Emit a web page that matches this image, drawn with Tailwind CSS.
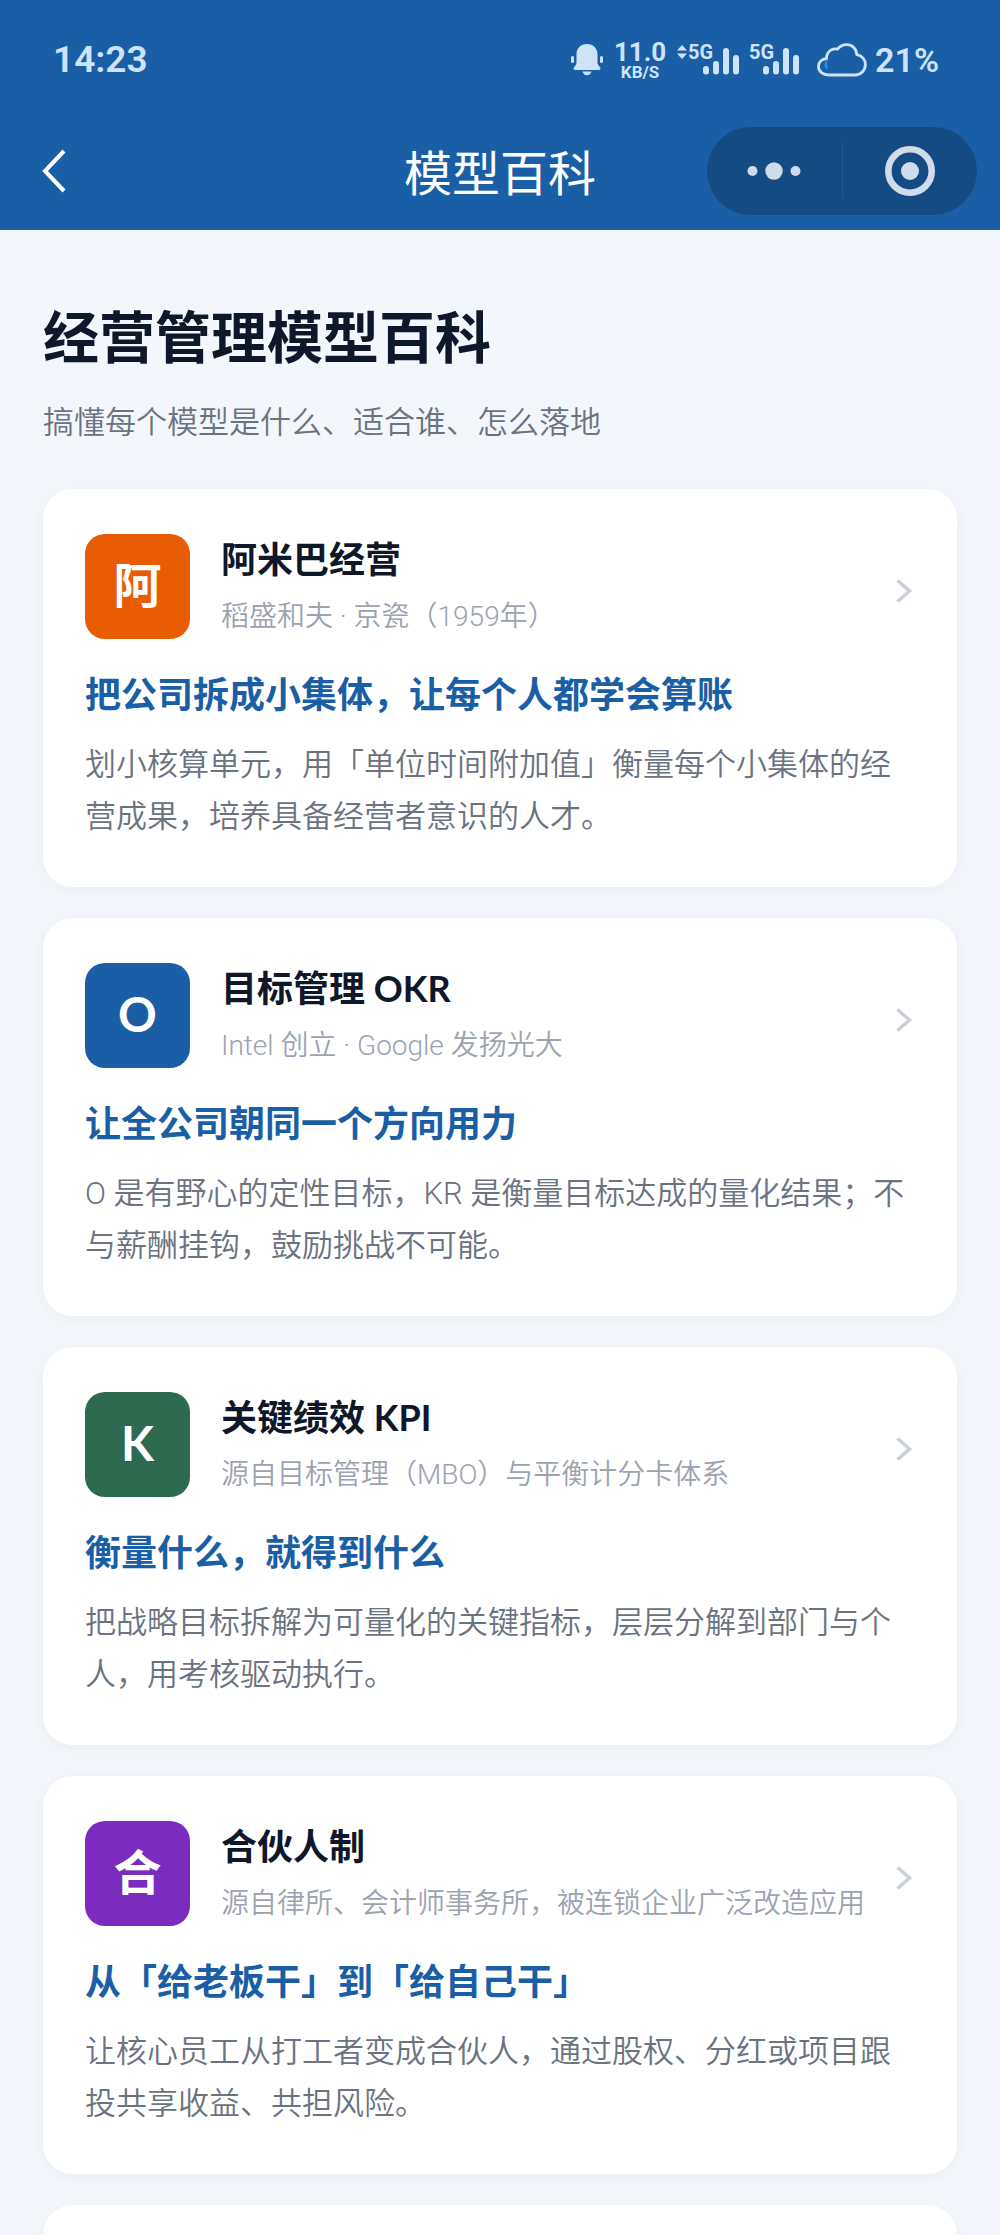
<!DOCTYPE html>
<html lang="zh-CN">
<head>
    <meta charset="UTF-8">
    <meta name="viewport" content="width=device-width, initial-scale=1.0">
    <title>模型百科</title>
    <script src="https://cdn.jsdelivr.net/npm/@tailwindcss/browser@4"></script>
</head>
<body class="h-screen flex flex-col overflow-hidden bg-[#f3f7fc] font-['Lato','Noto_Sans_CJK_SC',sans-serif]">

    <header class="shrink-0 bg-[#1a5fa6] text-white">
        <!-- Status bar -->
        <div class="h-[112px] pt-2 pl-[53px] pr-[61px] flex items-center justify-between text-[#cfe3f8] font-['Roboto',sans-serif]">
            <span class="text-[37px] font-semibold">14:23</span>
            <div class="flex items-center">
                <svg class="w-8 h-8" viewBox="0 0 32 32" fill="currentColor">
                    <path d="M16 0C9.500 0 5.500 4.500 5.500 10.500V18c0 2-.8 3.400-2.500 5.200-.9 1-.5 2.800 1 2.800h24c1.500 0 1.900-1.800 1-2.800-1.700-1.800-2.500-3.200-2.500-5.200v-7.500C26.500 4.500 22.500 0 16 0z"/>
                    <path d="M11.500 27.500h9c-.6 2.400-2.300 3.700-4.500 3.700s-3.900-1.300-4.500-3.700z"/>
                    <rect x="0" y="12" width="3" height="7" rx="1.500"/>
                    <rect x="29" y="12" width="3" height="7" rx="1.500"/>
                </svg>
                <div class="ml-3 w-[50px] flex flex-col items-center font-bold">
                    <span class="text-[26px] leading-6">11.0</span>
                    <span class="text-[17px] leading-4">KB/S</span>
                </div>
                <svg class="ml-3 w-[64px] h-8 overflow-visible" viewBox="0 0 64 32" fill="currentColor">
                    <path d="M0 6.500L5 1l5 5.500zM0 9.500h10L5 15z"/>
                    <text x="11" y="15" font-size="20" font-weight="700">5G</text>
                    <rect x="26" y="22" width="6" height="8.500" rx="3"/>
                    <rect x="36" y="17" width="6" height="13.500" rx="3"/>
                    <rect x="46" y="4" width="6" height="26.500" rx="3"/>
                    <rect x="56" y="11" width="6" height="19.500" rx="3"/>
                </svg>
                <svg class="ml-2 w-[52px] h-8 overflow-visible" viewBox="0 0 52 32" fill="currentColor">
                    <text x="0" y="15" font-size="20" font-weight="700">5G</text>
                    <rect x="14" y="22" width="6" height="8.500" rx="3"/>
                    <rect x="24" y="17" width="6" height="13.500" rx="3"/>
                    <rect x="34" y="4" width="6" height="26.500" rx="3"/>
                    <rect x="44" y="11" width="6" height="19.500" rx="3"/>
                </svg>
                <svg class="ml-4 w-[50px] h-[34px]" viewBox="0 0 50 34" fill="none">
                    <path d="M9.500 15.500C9.500 9 15 4.500 20.500 6.200 23 3.200 26 1.700 29.500 1.700c6 0 10 4.300 10.300 10 5.200.8 8.600 5 8.600 9.800 0 6-4.700 10.500-10.400 10.500H12C6 32 1.500 28.500 1.500 23.500c0-4.300 3.300-7.600 8-8z" stroke="currentColor" stroke-width="2.800" stroke-linejoin="round"/>
                    <path d="M10.500 17c-4 2-4 8.500 0 9.500z" fill="#1e90ff"/>
                </svg>
                <span class="ml-2 text-[34px] font-semibold">21%</span>
            </div>
        </div>

        <!-- Nav bar -->
        <div class="h-[118px] px-[23px] grid grid-cols-[1fr_auto_1fr] items-center">
            <button class="w-14 h-11 pl-4 flex items-center" aria-label="返回">
                <svg class="w-7 h-11" viewBox="0 0 28 44" fill="none" stroke="currentColor" stroke-width="4">
                    <path d="M25 2L6 22 25 42"/>
                </svg>
            </button>
            <h1 class="pt-1 text-5xl font-normal">模型百科</h1>
            <div class="justify-self-end w-[270px] h-[88px] rounded-full bg-[#144b83] text-[#d0dcec] flex items-center">
                <button class="flex-1 h-full flex items-center justify-center" aria-label="更多">
                    <svg class="w-14 h-5" viewBox="0 0 56 20" fill="currentColor">
                        <circle cx="6.500" cy="10" r="5"/><circle cx="28" cy="10" r="8.700"/><circle cx="49.500" cy="10" r="5"/>
                    </svg>
                </button>
                <span class="w-px h-14 bg-[#22578f]"></span>
                <button class="flex-1 h-full flex items-center justify-center" aria-label="关闭">
                    <svg class="size-[50px]" viewBox="0 0 50 50">
                        <circle cx="25" cy="25" r="21.700" fill="none" stroke="currentColor" stroke-width="6.600"/>
                        <circle cx="25" cy="25" r="9" fill="currentColor"/>
                    </svg>
                </button>
            </div>
        </div>
    </header>

    <main class="flex-1 min-h-0 overflow-y-auto [scrollbar-width:none] px-[43px] pt-[68px]">
        <h2 class="text-[56px] leading-[78px] font-bold text-[#0f172a]">经营管理模型百科</h2>
        <p class="mt-[22px] text-[31px] leading-[46px] font-[350] text-[#6b7280]">搞懂每个模型是什么、适合谁、怎么落地</p>

        <div class="mt-[45px] flex flex-col gap-[31px]">

            <!-- 阿米巴 -->
            <a href="#" class="block rounded-[30px] bg-white px-[42px] pt-[45px] pb-11 shadow-[0_3px_16px_rgba(15,23,42,0.04)]">
                <div class="h-[105px] flex items-center">
                    <span class="size-[105px] pb-1 shrink-0 rounded-[20px] bg-[#e85d04] flex items-center justify-center text-5xl font-bold text-white">阿</span>
                    <div class="ml-[31px] pb-1 flex-1 flex flex-col gap-3">
                        <h3 class="text-[36px] leading-[52px] font-bold text-[#0f172a]">阿米巴经营</h3>
                        <p class="font-['Roboto','Noto_Sans_CJK_SC',sans-serif] text-[28px] leading-10 font-[350] text-[#9ca3af] whitespace-nowrap">稻盛和夫 · 京瓷（1959年）</p>
                    </div>
                    <svg class="mt-2 mr-[3px] w-4 h-6 shrink-0" viewBox="0 0 16 24" fill="none" stroke="#cbd0d8" stroke-width="3.500"><path d="M1.500 1.500L13.500 12 1.500 22.500"/></svg>
                </div>
                <p class="mt-7 text-[36px] leading-[54px] font-semibold text-[#1a5fa6]">把公司拆成小集体，让每个人都学会算账</p>
                <p class="mt-[18px] font-['Roboto','Noto_Sans_CJK_SC',sans-serif] text-[31px] leading-[52px] font-[350] text-[#6b7280]">划小核算单元，用「单位时间附加值」衡量每个小集体的经营成果，培养具备经营者意识的人才。</p>
            </a>

            <!-- OKR -->
            <a href="#" class="block rounded-[30px] bg-white px-[42px] pt-[45px] pb-11 shadow-[0_3px_16px_rgba(15,23,42,0.04)]">
                <div class="h-[105px] flex items-center">
                    <span class="size-[105px] pb-1 shrink-0 rounded-[20px] bg-[#1a5fa6] flex items-center justify-center text-5xl font-bold text-white">O</span>
                    <div class="ml-[31px] pb-1 flex-1 flex flex-col gap-3">
                        <h3 class="text-[36px] leading-[52px] font-bold text-[#0f172a]">目标管理 OKR</h3>
                        <p class="font-['Roboto','Noto_Sans_CJK_SC',sans-serif] text-[28px] leading-10 font-[350] text-[#9ca3af] whitespace-nowrap">Intel 创立 · Google 发扬光大</p>
                    </div>
                    <svg class="mt-2 mr-[3px] w-4 h-6 shrink-0" viewBox="0 0 16 24" fill="none" stroke="#cbd0d8" stroke-width="3.500"><path d="M1.500 1.500L13.500 12 1.500 22.500"/></svg>
                </div>
                <p class="mt-7 text-[36px] leading-[54px] font-semibold text-[#1a5fa6]">让全公司朝同一个方向用力</p>
                <p class="mt-[18px] font-['Roboto','Noto_Sans_CJK_SC',sans-serif] text-[31px] leading-[52px] font-[350] text-[#6b7280]">O 是有野心的定性目标，KR 是衡量目标达成的量化结果；不与薪酬挂钩，鼓励挑战不可能。</p>
            </a>

            <!-- KPI -->
            <a href="#" class="block rounded-[30px] bg-white px-[42px] pt-[45px] pb-11 shadow-[0_3px_16px_rgba(15,23,42,0.04)]">
                <div class="h-[105px] flex items-center">
                    <span class="size-[105px] pb-1 shrink-0 rounded-[20px] bg-[#2d6a4f] flex items-center justify-center text-5xl font-bold text-white">K</span>
                    <div class="ml-[31px] pb-1 flex-1 flex flex-col gap-3">
                        <h3 class="text-[36px] leading-[52px] font-bold text-[#0f172a]">关键绩效 KPI</h3>
                        <p class="font-['Roboto','Noto_Sans_CJK_SC',sans-serif] text-[28px] leading-10 font-[350] text-[#9ca3af] whitespace-nowrap">源自目标管理（MBO）与平衡计分卡体系</p>
                    </div>
                    <svg class="mt-2 mr-[3px] w-4 h-6 shrink-0" viewBox="0 0 16 24" fill="none" stroke="#cbd0d8" stroke-width="3.500"><path d="M1.500 1.500L13.500 12 1.500 22.500"/></svg>
                </div>
                <p class="mt-7 text-[36px] leading-[54px] font-semibold text-[#1a5fa6]">衡量什么，就得到什么</p>
                <p class="mt-[18px] font-['Roboto','Noto_Sans_CJK_SC',sans-serif] text-[31px] leading-[52px] font-[350] text-[#6b7280]">把战略目标拆解为可量化的关键指标，层层分解到部门与个人，用考核驱动执行。</p>
            </a>

            <!-- 合伙人 -->
            <a href="#" class="block rounded-[30px] bg-white px-[42px] pt-[45px] pb-11 shadow-[0_3px_16px_rgba(15,23,42,0.04)]">
                <div class="h-[105px] flex items-center">
                    <span class="size-[105px] pb-1 shrink-0 rounded-[20px] bg-[#7b2cbf] flex items-center justify-center text-5xl font-bold text-white">合</span>
                    <div class="ml-[31px] pb-1 flex-1 flex flex-col gap-3">
                        <h3 class="text-[36px] leading-[52px] font-bold text-[#0f172a]">合伙人制</h3>
                        <p class="font-['Roboto','Noto_Sans_CJK_SC',sans-serif] text-[28px] leading-10 font-[350] text-[#9ca3af] whitespace-nowrap">源自律所、会计师事务所，被连锁企业广泛改造应用</p>
                    </div>
                    <svg class="mt-2 mr-[3px] w-4 h-6 shrink-0" viewBox="0 0 16 24" fill="none" stroke="#cbd0d8" stroke-width="3.500"><path d="M1.500 1.500L13.500 12 1.500 22.500"/></svg>
                </div>
                <p class="mt-7 text-[36px] leading-[54px] font-semibold text-[#1a5fa6]">从「给老板干」到「给自己干」</p>
                <p class="mt-[18px] font-['Roboto','Noto_Sans_CJK_SC',sans-serif] text-[31px] leading-[52px] font-[350] text-[#6b7280]">让核心员工从打工者变成合伙人，通过股权、分红或项目跟投共享收益、共担风险。</p>
            </a>

            <div class="rounded-[30px] bg-white pt-[45px] pb-11 shadow-[0_3px_16px_rgba(15,23,42,0.04)]"></div>
        </div>
    </main>

</body>
</html>
